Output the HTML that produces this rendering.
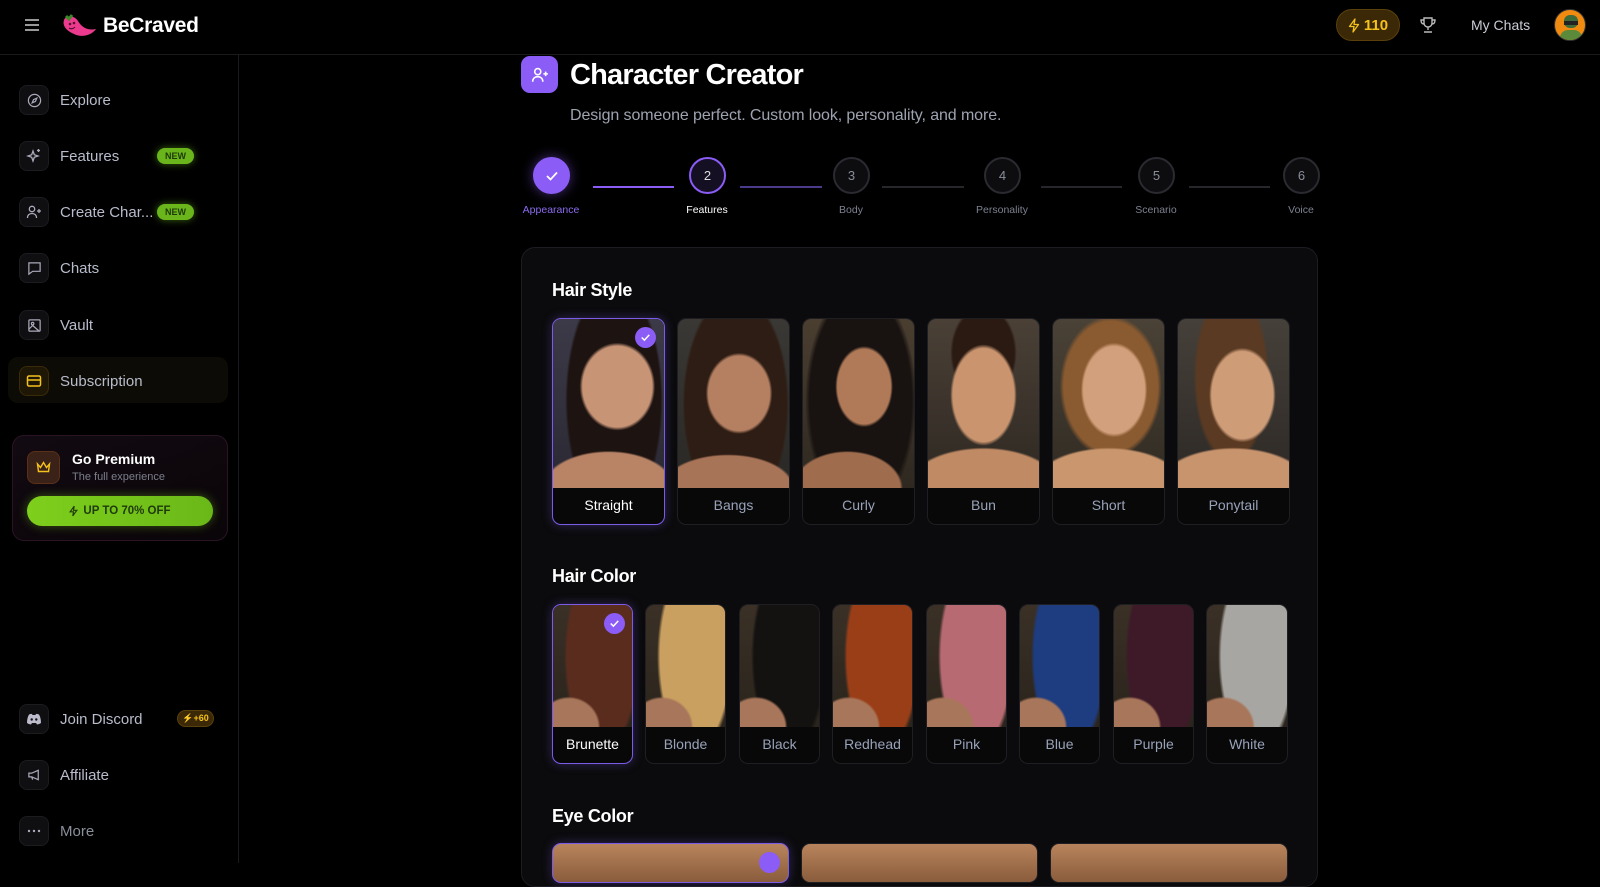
<!DOCTYPE html>
<html><head><meta charset="utf-8"><style>
*{box-sizing:border-box;margin:0;padding:0}
body{width:1600px;height:863px;overflow:hidden;background:#000;font-family:"Liberation Sans",sans-serif;color:#fff;position:relative}
.abs{position:absolute}
.hdr{left:0;top:0;width:1600px;height:55px;border-bottom:1px solid #1a1a1d}
.side{left:0;top:55px;width:239px;height:808px;border-right:1px solid #1a1a1d}
.nav{position:absolute;left:19px;display:flex;align-items:center;font-size:15px;color:#b8bccb}
.ib{width:30px;height:30px;border-radius:8px;background:#0f0f11;border:1px solid #1c1c20;display:flex;align-items:center;justify-content:center;margin-right:11px}
.new{position:absolute;left:157px;width:37px;height:16px;border-radius:8px;background:#6bb51c;color:#1d3a06;font-size:9px;font-weight:bold;text-align:center;line-height:16px;box-shadow:0 0 8px rgba(120,200,30,.5)}
.panel{left:521px;top:247px;width:797px;height:640px;border:1px solid #1c1c21;border-radius:14px;background:#0b0b0d}
h3{position:absolute;font-size:18px;font-weight:bold;letter-spacing:-.3px}
.card{position:absolute;border:1px solid #1e1e23;border-radius:9px;overflow:hidden;background:#080809}
.card .im{position:absolute;left:0;top:0;right:0}
.card .lb{position:absolute;left:0;right:0;bottom:0;text-align:center;font-size:14px;color:#98a2b8}
.sel{border:1.5px solid #7c5ce6;box-shadow:0 0 10px rgba(124,92,230,.35)}
.sel .lb{color:#fff}
.chk{position:absolute;width:21px;height:21px;border-radius:50%;background:#8b5cf6;display:flex;align-items:center;justify-content:center}
.step{position:absolute;width:37px;height:37px;border-radius:50%;border:2px solid #2a2a30;background:#0d0d10;color:#8a8e9a;font-size:13px;display:flex;align-items:center;justify-content:center;top:157px}
.sl{position:absolute;top:186px;height:2px;background:#26262b}
.stl{position:absolute;top:204px;font-size:10.5px;color:#7d8190;transform:translateX(-50%)}
</style></head><body>
<div class="abs hdr"></div>
<svg class="abs" style="left:24px;top:18px" width="16" height="14" viewBox="0 0 16 14"><path d="M1 2h14M1 7h14M1 12h14" stroke="#ccc" stroke-width="1.6"/></svg>
<svg class="abs" style="left:60px;top:12px" width="38" height="28" viewBox="0 0 38 28"><path d="M4 8c2-5 10-5 14 1 3 5 8 10 18 8-4 6-14 9-22 5C7 19 2 14 4 8z" fill="#ec3b8f"/><path d="M6 4l3 3 3-4" stroke="#3a8a2a" stroke-width="3" fill="none"/><circle cx="10" cy="12" r="1.3" fill="#5a0d2f"/><circle cx="14" cy="11" r="1.3" fill="#5a0d2f"/><path d="M9 16q3 2 6-1" stroke="#5a0d2f" stroke-width="1.2" fill="none"/></svg>
<div class="abs" style="left:103px;top:14px;font-size:21px;font-weight:bold;letter-spacing:-.3px">BeCraved</div>
<div class="abs" style="left:1336px;top:9px;width:64px;height:32px;border-radius:16px;background:#3a2806;border:1px solid #5a400a;color:#f5c21b;font-size:15px;font-weight:bold;display:flex;align-items:center;justify-content:center;gap:4px"><svg width="12" height="15" viewBox="0 0 12 15"><path d="M7 1L1.5 8.5h4.5L5 14l5.5-7.5H6z" stroke="#f5c21b" stroke-width="1.3" fill="none" stroke-linejoin="round"/></svg>110</div>
<svg class="abs" style="left:1419px;top:16px" width="18" height="18" viewBox="0 0 18 18" fill="none" stroke="#bbb" stroke-width="1.4"><path d="M5 2h8v5a4 4 0 0 1-8 0zM5 4H2q0 4 3 4M13 4h3q0 4-3 4M9 11v3M5 16h8"/></svg>
<div class="abs" style="left:1471px;top:17px;font-size:14px;color:#c8ccd6">My Chats</div>
<div class="abs" style="left:1554px;top:9px;width:32px;height:32px;border-radius:50%;background:#f08a10;overflow:hidden;border:1px solid #333"><div style="position:absolute;left:9px;top:5px;width:14px;height:13px;border-radius:6px;background:#3d6b3a"></div><div style="position:absolute;left:9px;top:11px;width:14px;height:4px;background:#222"></div><div style="position:absolute;left:5px;top:20px;width:22px;height:14px;border-radius:8px 8px 0 0;background:#5a8a3a"></div></div>

<div class="abs side"></div>
<div class="abs" style="left:8px;top:357px;width:220px;height:46px;border-radius:10px;background:#0d0b05"></div>
<div class="nav" style="top:85px"><div class="ib"><svg width="15" height="15" viewBox="0 0 16 16" fill="none" stroke="#aab" stroke-width="1.3"><circle cx="8" cy="8" r="6.5"/><path d="M10.5 5.5L9 9 5.5 10.5 7 7z"/></svg></div>Explore</div>
<div class="nav" style="top:141px"><div class="ib"><svg width="16" height="16" viewBox="0 0 16 16" fill="none" stroke="#aab" stroke-width="1.3"><path d="M7 3l1.3 3.7L12 8l-3.7 1.3L7 13l-1.3-3.7L2 8l3.7-1.3zM12.5 1v3M11 2.5h3"/></svg></div>Features</div>
<div class="new" style="top:148px">NEW</div>
<div class="nav" style="top:197px"><div class="ib"><svg width="16" height="16" viewBox="0 0 16 16" fill="none" stroke="#aab" stroke-width="1.3"><circle cx="6" cy="5" r="2.7"/><path d="M1.5 14c0-3 2-4.5 4.5-4.5S10.5 11 10.5 14M13 5v4M11 7h4"/></svg></div>Create Char...</div>
<div class="new" style="top:204px">NEW</div>
<div class="nav" style="top:253px"><div class="ib"><svg width="15" height="15" viewBox="0 0 16 16" fill="none" stroke="#aab" stroke-width="1.3"><path d="M2 2h12v9H6l-4 3z"/></svg></div>Chats</div>
<div class="nav" style="top:310px"><div class="ib"><svg width="15" height="15" viewBox="0 0 16 16" fill="none" stroke="#aab" stroke-width="1.3"><rect x="2" y="2" width="12" height="12" rx="1"/><circle cx="6" cy="6" r="1.3"/><path d="M2 12l4-4 7 6"/></svg></div>Vault</div>
<div class="nav" style="top:366px"><div class="ib" style="background:#1f1706;border-color:#3a2a08"><svg width="16" height="14" viewBox="0 0 16 14" fill="none" stroke="#f5c21b" stroke-width="1.5"><rect x="1.5" y="2" width="13" height="10" rx="1.5"/><path d="M1.5 6h13"/></svg></div>Subscription</div>

<div class="abs" style="left:12px;top:435px;width:216px;height:106px;border-radius:12px;border:1px solid #2a1424;background:linear-gradient(160deg,#120a12,#0a0508)"></div>
<div class="abs" style="left:27px;top:451px;width:33px;height:33px;border-radius:8px;background:#3a2218;border:1px solid #5a3018;display:flex;align-items:center;justify-content:center"><svg width="15" height="13" viewBox="0 0 15 13" fill="none" stroke="#f5c21b" stroke-width="1.4"><path d="M1.5 3l3 3.5 3-5 3 5 3-3.5-1 7.5h-10z"/></svg></div>
<div class="abs" style="left:72px;top:451px;font-size:14px;font-weight:bold">Go Premium</div>
<div class="abs" style="left:72px;top:471px;font-size:11px;color:#7b7f8c">The full experience</div>
<div class="abs" style="left:27px;top:496px;width:186px;height:30px;border-radius:15px;background:linear-gradient(90deg,#7ecf1c,#6ab818);box-shadow:0 0 10px rgba(126,207,28,.4);display:flex;align-items:center;justify-content:center;gap:5px;font-size:11.5px;font-weight:bold;color:#1f3a08"><svg width="9" height="12" viewBox="0 0 12 15"><path d="M7 1L1.5 8.5h4.5L5 14l5.5-7.5H6z" stroke="#1f3a08" stroke-width="1.5" fill="none"/></svg>UP TO 70% OFF</div>

<div class="nav" style="top:704px"><div class="ib"><svg width="16" height="12" viewBox="0 0 16 12"><path d="M3 1.5Q5.5 0.5 6 1l.5 1h3l.5-1q.5-.5 3 .5Q15 5 15 10q-2 1.5-4 1.5l-1-1.5H6L5 11.5Q3 11.5 1 10q0-5 2-8.5z" fill="#bbc"/><circle cx="5.7" cy="6.5" r="1.2" fill="#0f0f11"/><circle cx="10.3" cy="6.5" r="1.2" fill="#0f0f11"/></svg></div>Join Discord</div>
<div class="abs" style="left:177px;top:710px;width:37px;height:17px;border-radius:9px;background:#3a2806;border:1px solid #5a400a;color:#f5c21b;font-size:9px;font-weight:bold;text-align:center;line-height:15px">⚡+60</div>
<div class="nav" style="top:760px"><div class="ib"><svg width="15" height="14" viewBox="0 0 16 14" fill="none" stroke="#aab" stroke-width="1.3"><path d="M2 5h3l7-3v10L5 9H2zM5 9l1 3"/></svg></div>Affiliate</div>
<div class="nav" style="top:816px"><div class="ib"><svg width="14" height="4" viewBox="0 0 14 4"><circle cx="2" cy="2" r="1.2" fill="#aab"/><circle cx="7" cy="2" r="1.2" fill="#aab"/><circle cx="12" cy="2" r="1.2" fill="#aab"/></svg></div><span style="color:#8a8e9a">More</span></div>

<div class="abs" style="left:521px;top:56px;width:37px;height:37px;border-radius:9px;background:#8b5cf6;display:flex;align-items:center;justify-content:center"><svg width="18" height="18" viewBox="0 0 16 16" fill="none" stroke="#fff" stroke-width="1.4"><circle cx="6" cy="5" r="2.7"/><path d="M1.5 14c0-3 2-4.5 4.5-4.5S10.5 11 10.5 14M13 5v4M11 7h4"/></svg></div>
<div class="abs" style="left:570px;top:59px;font-size:29px;font-weight:bold;letter-spacing:-.8px">Character Creator</div>
<div class="abs" style="left:570px;top:107px;font-size:16px;color:#9ea3b0;letter-spacing:-.1px">Design someone perfect. Custom look, personality, and more.</div>

<div class="sl" style="left:593px;width:81px;background:#8b5cf6"></div>
<div class="sl" style="left:740px;width:82px;background:#4b3a8a"></div>
<div class="sl" style="left:882px;width:82px"></div>
<div class="sl" style="left:1041px;width:81px"></div>
<div class="sl" style="left:1189px;width:81px"></div>
<div class="step" style="left:533px;background:#8b5cf6;border-color:#8b5cf6;box-shadow:0 0 12px rgba(139,92,246,.5)"><svg width="14" height="12" viewBox="0 0 14 12"><path d="M2 6l3.5 3.5L12 2.5" stroke="#fff" stroke-width="1.8" fill="none"/></svg></div>
<div class="step" style="left:689px;border-color:#8b5cf6;color:#ddd;background:#150f24">2</div>
<div class="step" style="left:833px">3</div>
<div class="step" style="left:984px">4</div>
<div class="step" style="left:1138px">5</div>
<div class="step" style="left:1283px">6</div>
<div class="stl" style="left:551px;color:#8b6cf0">Appearance</div>
<div class="stl" style="left:707px;color:#fff">Features</div>
<div class="stl" style="left:851px">Body</div>
<div class="stl" style="left:1002px">Personality</div>
<div class="stl" style="left:1156px">Scenario</div>
<div class="stl" style="left:1301px">Voice</div>

<div class="abs panel"></div>
<h3 style="left:552px;top:280px">Hair Style</h3>
<h3 style="left:552px;top:566px">Hair Color</h3>
<h3 style="left:552px;top:806px">Eye Color</h3>

<div class="card sel" style="left:552px;top:318px;width:113px;height:207px"><div class="im" style="height:169px;background:radial-gradient(ellipse 34% 26% at 58% 40%,#c89476 92%,transparent 100%),radial-gradient(ellipse 60% 22% at 50% 100%,#b98466 95%,transparent 100%),radial-gradient(ellipse 44% 70% at 55% 48%,#1d1412 95%,transparent 100%),linear-gradient(#3c3a48,#2a2832)"></div><div class="lb" style="height:38px;line-height:38px">Straight</div><div class="chk" style="left:82px;top:8px"><svg width="11" height="9" viewBox="0 0 14 12"><path d="M2 6l3.5 3.5L12 2.5" stroke="#fff" stroke-width="2" fill="none"/></svg></div></div>
<div class="card" style="left:677px;top:318px;width:113px;height:207px"><div class="im" style="height:169px;background:radial-gradient(ellipse 30% 24% at 55% 44%,#b58062 92%,transparent 100%),radial-gradient(ellipse 60% 20% at 45% 100%,#a87458 95%,transparent 100%),radial-gradient(ellipse 48% 66% at 52% 50%,#2e1d14 95%,transparent 100%),linear-gradient(#3a3835,#2a2825)"></div><div class="lb" style="height:38px;line-height:38px">Bangs</div></div>
<div class="card" style="left:802px;top:318px;width:113px;height:207px"><div class="im" style="height:169px;background:radial-gradient(ellipse 26% 24% at 55% 40%,#b07a58 92%,transparent 100%),radial-gradient(ellipse 50% 22% at 40% 100%,#a06c4e 95%,transparent 100%),radial-gradient(ellipse 50% 68% at 52% 48%,#181210 92%,transparent 100%),linear-gradient(#4a3e30,#2e2820)"></div><div class="lb" style="height:38px;line-height:38px">Curly</div></div>
<div class="card" style="left:927px;top:318px;width:113px;height:207px"><div class="im" style="height:169px;background:radial-gradient(ellipse 30% 30% at 50% 45%,#c9946e 92%,transparent 100%),radial-gradient(ellipse 70% 24% at 50% 100%,#c08a64 95%,transparent 100%),radial-gradient(ellipse 30% 28% at 50% 20%,#2a1a12 92%,transparent 100%),linear-gradient(#4a4036,#2e2822)"></div><div class="lb" style="height:38px;line-height:38px">Bun</div></div>
<div class="card" style="left:1052px;top:318px;width:113px;height:207px"><div class="im" style="height:169px;background:radial-gradient(ellipse 30% 28% at 55% 42%,#d2a07c 92%,transparent 100%),radial-gradient(ellipse 70% 24% at 50% 100%,#c9966e 95%,transparent 100%),radial-gradient(ellipse 46% 42% at 52% 40%,#8a5a30 92%,transparent 100%),linear-gradient(#4a4236,#302a22)"></div><div class="lb" style="height:38px;line-height:38px">Short</div></div>
<div class="card" style="left:1177px;top:318px;width:113px;height:207px"><div class="im" style="height:169px;background:radial-gradient(ellipse 30% 28% at 58% 45%,#cf9c78 92%,transparent 100%),radial-gradient(ellipse 70% 24% at 50% 100%,#c8946e 95%,transparent 100%),radial-gradient(ellipse 34% 52% at 48% 34%,#5a3a22 92%,transparent 100%),linear-gradient(#46403a,#2c2824)"></div><div class="lb" style="height:38px;line-height:38px">Ponytail</div></div>

<div class="card sel" style="left:552px;top:604px;width:81px;height:160px"><div class="im" style="height:122px;background:radial-gradient(ellipse 40% 25% at 20% 100%,#a8765a 92%,transparent 100%),radial-gradient(ellipse 48% 80% at 62% 42%,#5a2c1e 92%,transparent 100%),linear-gradient(#3a3026,#2a241c)"></div><div class="lb" style="height:38px;line-height:38px">Brunette</div><div class="chk" style="left:51px;top:8px"><svg width="11" height="9" viewBox="0 0 14 12"><path d="M2 6l3.5 3.5L12 2.5" stroke="#fff" stroke-width="2" fill="none"/></svg></div></div>
<div class="card" style="left:645px;top:604px;width:81px;height:160px"><div class="im" style="height:122px;background:radial-gradient(ellipse 40% 25% at 20% 100%,#a8765a 92%,transparent 100%),radial-gradient(ellipse 48% 80% at 62% 42%,#c9a060 92%,transparent 100%),linear-gradient(#3a3026,#2a241c)"></div><div class="lb" style="height:38px;line-height:38px">Blonde</div></div>
<div class="card" style="left:739px;top:604px;width:81px;height:160px"><div class="im" style="height:122px;background:radial-gradient(ellipse 40% 25% at 20% 100%,#a8765a 92%,transparent 100%),radial-gradient(ellipse 48% 80% at 62% 42%,#141210 92%,transparent 100%),linear-gradient(#3a3026,#2a241c)"></div><div class="lb" style="height:38px;line-height:38px">Black</div></div>
<div class="card" style="left:832px;top:604px;width:81px;height:160px"><div class="im" style="height:122px;background:radial-gradient(ellipse 40% 25% at 20% 100%,#a8765a 92%,transparent 100%),radial-gradient(ellipse 48% 80% at 62% 42%,#9a3e18 92%,transparent 100%),linear-gradient(#3a3026,#2a241c)"></div><div class="lb" style="height:38px;line-height:38px">Redhead</div></div>
<div class="card" style="left:926px;top:604px;width:81px;height:160px"><div class="im" style="height:122px;background:radial-gradient(ellipse 40% 25% at 20% 100%,#a8765a 92%,transparent 100%),radial-gradient(ellipse 48% 80% at 62% 42%,#b86a72 92%,transparent 100%),linear-gradient(#3a3026,#2a241c)"></div><div class="lb" style="height:38px;line-height:38px">Pink</div></div>
<div class="card" style="left:1019px;top:604px;width:81px;height:160px"><div class="im" style="height:122px;background:radial-gradient(ellipse 40% 25% at 20% 100%,#a8765a 92%,transparent 100%),radial-gradient(ellipse 48% 80% at 62% 42%,#1e3c80 92%,transparent 100%),linear-gradient(#3a3026,#2a241c)"></div><div class="lb" style="height:38px;line-height:38px">Blue</div></div>
<div class="card" style="left:1113px;top:604px;width:81px;height:160px"><div class="im" style="height:122px;background:radial-gradient(ellipse 40% 25% at 20% 100%,#a8765a 92%,transparent 100%),radial-gradient(ellipse 48% 80% at 62% 42%,#3e1a28 92%,transparent 100%),linear-gradient(#3a3026,#2a241c)"></div><div class="lb" style="height:38px;line-height:38px">Purple</div></div>
<div class="card" style="left:1206px;top:604px;width:82px;height:160px"><div class="im" style="height:122px;background:radial-gradient(ellipse 40% 25% at 20% 100%,#a8765a 92%,transparent 100%),radial-gradient(ellipse 48% 80% at 62% 42%,#a8a6a2 92%,transparent 100%),linear-gradient(#3a3026,#2a241c)"></div><div class="lb" style="height:38px;line-height:38px">White</div></div>

<div class="card sel" style="left:552px;top:843px;width:237px;height:40px;background:linear-gradient(#b8845c,#8a5c3c)"><div class="chk" style="left:206px;top:8px"></div></div>
<div class="card" style="left:801px;top:843px;width:237px;height:40px;background:linear-gradient(#b8845c,#8a5c3c)"></div>
<div class="card" style="left:1050px;top:843px;width:238px;height:40px;background:linear-gradient(#b8845c,#8a5c3c)"></div>
</body></html>
